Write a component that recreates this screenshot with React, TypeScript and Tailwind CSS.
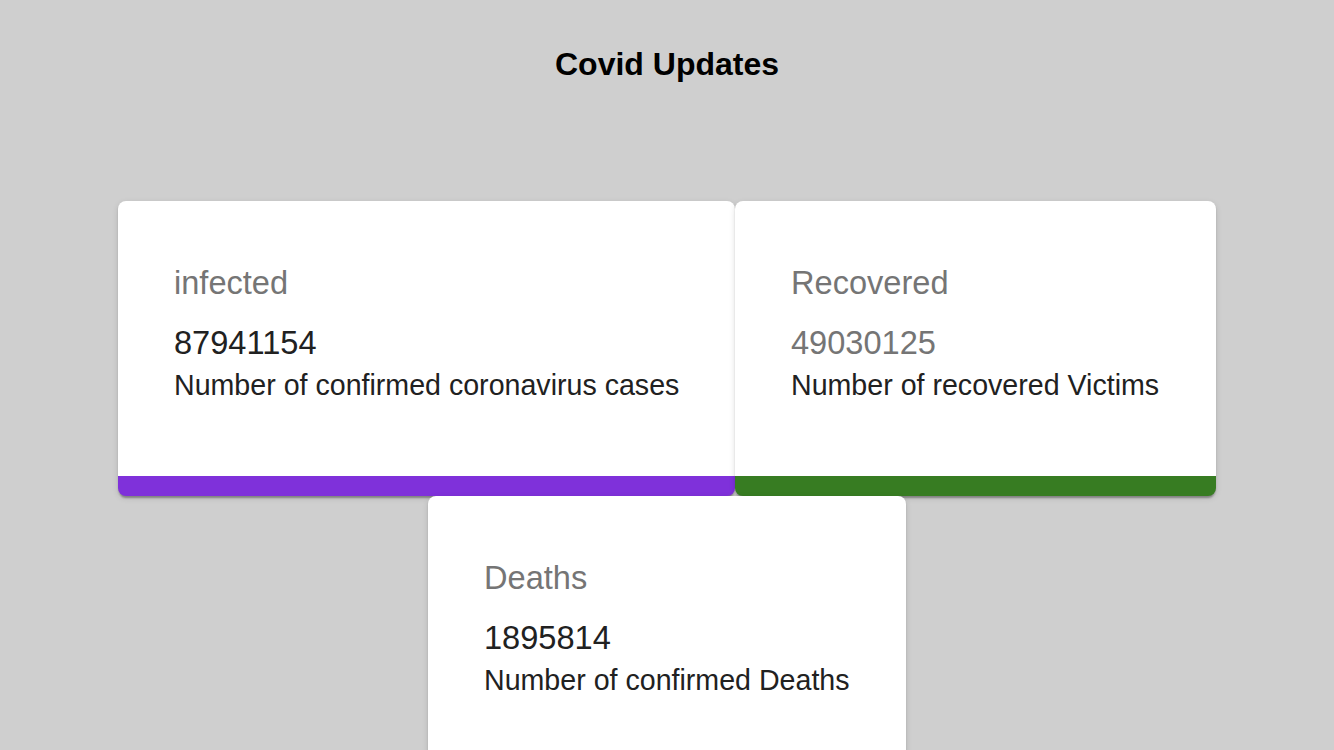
import React from "react";

type Stat = {
  label: string;
  value: string;
  desc: string;
  valueClass: string;
  borderClass: string;
  widthClass: string;
};

const stats: Stat[] = [
  {
    label: "infected",
    value: "87941154",
    desc: "Number of confirmed coronavirus cases",
    valueClass: "text-[#212121]",
    borderClass: "border-b-[#7f31da]",
    widthClass: "w-[617px]",
  },
  {
    label: "Recovered",
    value: "49030125",
    desc: "Number of recovered Victims",
    valueClass: "text-[#757575]",
    borderClass: "border-b-[#377c22]",
    widthClass: "w-[481px]",
  },
  {
    label: "Deaths",
    value: "1895814",
    desc: "Number of confirmed Deaths",
    valueClass: "text-[#212121]",
    borderClass: "border-b-[#d32f2f]",
    widthClass: "w-[478px]",
  },
];

function Card({ s }: { s: Stat }) {
  return (
    <div
      className={`${s.widthClass} shrink-0 bg-white rounded-lg border-b-[20px] ${s.borderClass} px-[56px] pt-[58px] pb-[71px] shadow-[0_4px_2px_-2px_rgba(0,0,0,0.2),0_2px_2px_0_rgba(0,0,0,0.14),0_2px_6px_0_rgba(0,0,0,0.12)]`}
    >
      <div className="text-[32.6px] leading-[48px] text-[#757575] mb-[14px]">{s.label}</div>
      <div className={`text-[32.6px] leading-[44px] ${s.valueClass}`}>{s.value}</div>
      <div className="text-[28.6px] leading-[40px] text-[#212121] whitespace-nowrap">{s.desc}</div>
    </div>
  );
}

export default function App() {
  return (
    <div
      className="min-h-screen bg-[#cfcfcf] pt-[40px]"
      style={{ fontFamily: '"Liberation Sans", Arial, Helvetica, sans-serif' }}
    >
      <h1 className="text-center text-[32px] leading-[48px] font-bold text-black">Covid Updates</h1>
      <div className="mt-[113px] flex flex-wrap justify-center">
        {stats.map((s) => (
          <Card key={s.label} s={s} />
        ))}
      </div>
    </div>
  );
}
